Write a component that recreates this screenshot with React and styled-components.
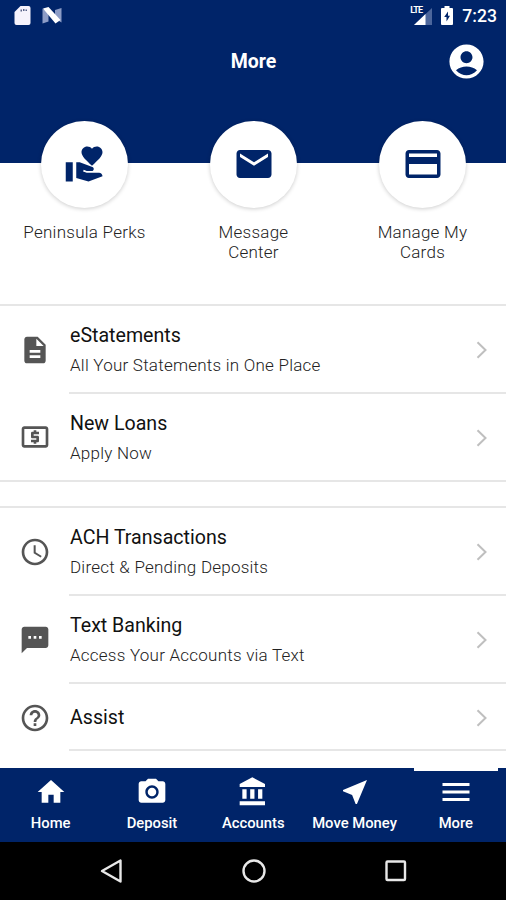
import React from "react";
import styled, { createGlobalStyle } from "styled-components";
import {
  MdAccessTime,
  MdAccountCircle,
  MdCameraAlt,
  MdCreditCard,
  MdDescription,
  MdEmail,
  MdHelpOutline,
  MdHome,
  MdLocalAtm,
  MdMenu,
  MdNearMe,
  MdSms,
  MdVolunteerActivism,
} from "react-icons/md";

const NAVY = "#002469";

const BankIcon = ({ size }) => (
  <svg width={size} height={size} viewBox="0 0 24 24" fill="currentColor">
    <path d="M4 10v7h3.200v-7H4zm5.900 0v7h3.200v-7H9.900zM2 22h19v-3H2v3zm13.800-12v7H19v-7h-3.200zm-4.300-9L2 6v2.300h19V6l-9.500-5z" />
  </svg>
);

const shortcuts = [
  { label: "Peninsula Perks", icon: MdVolunteerActivism },
  { label: "Message Center", icon: MdEmail },
  { label: "Manage My Cards", icon: MdCreditCard },
];

const statements = [
  {
    title: "eStatements",
    text: "All Your Statements in One Place",
    icon: MdDescription,
  },
  { title: "New Loans", text: "Apply Now", icon: MdLocalAtm },
];

const services = [
  {
    title: "ACH Transactions",
    text: "Direct & Pending Deposits",
    icon: MdAccessTime,
  },
  {
    title: "Text Banking",
    text: "Access Your Accounts via Text",
    icon: MdSms,
  },
  { title: "Assist", icon: MdHelpOutline },
];

const tabs = [
  { label: "Home", icon: MdHome, size: 32 },
  { label: "Deposit", icon: MdCameraAlt, size: 32 },
  { label: "Accounts", icon: BankIcon, size: 32 },
  { label: "Move Money", icon: MdNearMe, size: 32 },
  { label: "More", icon: MdMenu, size: 36, active: true },
];

const StatusIcons = () => (
  <StatusBar>
    <StatusGroup>
      <svg width="17" height="19" viewBox="0 0 17 19">
        <path
          d="M6.500 0h8a2 2 0 0 1 2 2v15a2 2 0 0 1-2 2H2.500a2 2 0 0 1-2-2V6z"
          fill="#f6f3fc"
        />
        <path d="M6.500 3.500H8v2H6.500zM9 3h1.500v2H9zM11.500 3.500H13v1.500h-1.500z" fill="#5a6489" />
      </svg>
      <svg width="20" height="17" viewBox="0 0 20 17">
        <path d="M.5 1.500v15l6-2V5zM19.500 1v14.500l-6.500-4V3z" fill="#8c9cc6" />
        <path d="M1 1.500 6.500 0l12 13-5 3.500z" fill="#fff" />
      </svg>
    </StatusGroup>
    <StatusGroup $right>
      <Signal>
        <Lte>LTE</Lte>
        <svg width="18" height="17" viewBox="0 0 18 17">
          <path d="M18 0v17H0z" fill="#4c669c" />
          <path d="M11.500 6v11H0z" fill="#fff" />
        </svg>
      </Signal>
      <svg width="12" height="19" viewBox="0 0 12 19">
        <path
          d="M3.500 0h5v2H11a1 1 0 0 1 1 1v15a1 1 0 0 1-1 1H1a1 1 0 0 1-1-1V3a1 1 0 0 1 1-1h2.500z"
          fill="#fff"
        />
        <path d="M7 5.500 3.200 11H5.500v4.500L9 9.800H7z" fill={NAVY} />
      </svg>
      <Clock>7:23</Clock>
    </StatusGroup>
  </StatusBar>
);

const MenuRow = ({ item, last }) => {
  const Icon = item.icon;
  return (
    <Row>
      <RowIcon>
        <Icon size={32} />
      </RowIcon>
      <RowBody $short={!item.text} $last={last}>
        <div>
          <RowTitle>{item.title}</RowTitle>
          {item.text && <RowText>{item.text}</RowText>}
        </div>
        <svg width="12" height="18" viewBox="0 0 12 18" fill="none">
          <path d="M1.500 1.200 9.500 9l-8 7.800" stroke="#bfbfbf" strokeWidth="2" />
        </svg>
      </RowBody>
    </Row>
  );
};

const App = () => {
  return (
    <React.Fragment>
      <GlobalStyle />
      <Screen>
        <Header>
          <StatusIcons />
          <TitleBar>
            <span />
            <PageTitle>More</PageTitle>
            <Profile>
              <MdAccountCircle size={41} />
            </Profile>
          </TitleBar>
        </Header>

        <Shortcuts>
          {shortcuts.map(({ label, icon: Icon }) => (
            <Shortcut key={label}>
              <Circle>
                <Icon size={42} />
              </Circle>
              <ShortcutLabel>{label}</ShortcutLabel>
            </Shortcut>
          ))}
        </Shortcuts>

        <Section>
          {statements.map((s, idx) => (
            <MenuRow key={s.title} item={s} last={idx === 1} />
          ))}
        </Section>
        <Gap />
        <Section $open>
          {services.map((s) => (
            <MenuRow key={s.title} item={s} />
          ))}
        </Section>

        <TabBar>
          {tabs.map(({ label, icon: Icon, size, active }) => (
            <Tab key={label}>
              <Indicator $active={active} />
              <TabIcon>
                <Icon size={size} />
              </TabIcon>
              <TabLabel>{label}</TabLabel>
            </Tab>
          ))}
        </TabBar>

        <SystemBar>
          <svg width="24" height="26" viewBox="0 0 24 26">
            <path d="M20.500 2.500v21L2 13z" />
          </svg>
          <svg width="26" height="26" viewBox="0 0 26 26">
            <circle cx="13" cy="13" r="10.500" />
          </svg>
          <svg width="24" height="26" viewBox="0 0 24 26">
            <rect x="2.500" y="3.500" width="18.500" height="18.500" rx="1" />
          </svg>
        </SystemBar>
      </Screen>
    </React.Fragment>
  );
};

const GlobalStyle = createGlobalStyle`
  * {
    box-sizing: border-box;
  }
  body {
    margin: 0;
    background: #fff;
    font-family: Roboto, "Liberation Sans", sans-serif;
  }
  svg {
    display: block;
    flex-shrink: 0;
  }
`;

const Screen = styled.div`
  width: 506px;
  height: 900px;
  display: flex;
  flex-direction: column;
  overflow: hidden;
  background: #fff;
`;

const Header = styled.header`
  height: 163px;
  flex-shrink: 0;
  background: ${NAVY};
  color: #fff;
`;

const StatusBar = styled.div`
  height: 31px;
  padding: 0 9px 0 14px;
  display: flex;
  justify-content: space-between;
  align-items: center;
`;

const StatusGroup = styled.div`
  display: flex;
  align-items: center;
  gap: ${(props) => (props.$right ? "9px" : "11px")};
`;

const Signal = styled.div`
  width: 22px;
  height: 19px;
  display: flex;
  align-items: flex-end;
  justify-content: flex-end;
  position: relative;
`;

const Lte = styled.span`
  position: absolute;
  left: 0;
  top: 0;
  font-size: 9px;
  line-height: 9px;
  font-weight: 700;
  letter-spacing: -0.9px;
`;

const Clock = styled.span`
  font-size: 17.6px;
  font-weight: 500;
`;

const TitleBar = styled.div`
  height: 61px;
  padding: 0 19px 0 20px;
  display: grid;
  grid-template-columns: 1fr auto 1fr;
  align-items: center;
`;

const PageTitle = styled.h1`
  margin: 0;
  font-size: 19.5px;
  font-weight: 700;
`;

const Profile = styled.div`
  display: flex;
  justify-content: flex-end;
`;

const Shortcuts = styled.div`
  height: 141px;
  flex-shrink: 0;
  display: grid;
  grid-template-columns: repeat(3, 169px);
`;

const Shortcut = styled.div`
  display: flex;
  flex-direction: column;
  align-items: center;
  margin-top: -42px;
`;

const Circle = styled.div`
  width: 87px;
  height: 87px;
  padding-bottom: 2px;
  border-radius: 50%;
  display: flex;
  align-items: center;
  justify-content: center;
  flex-shrink: 0;
  background: #fff;
  color: ${NAVY};
  box-shadow: 0 1px 4px rgba(0, 0, 0, 0.2);
`;

const ShortcutLabel = styled.span`
  width: 123px;
  margin-top: 14px;
  text-align: center;
  font-size: 17px;
  line-height: 20px;
  font-weight: 300;
  letter-spacing: 0.25px;
  color: #222;
`;

const Section = styled.section`
  border-top: 2px solid #e6e6e6;
  border-bottom: ${(props) => (props.$open ? "none" : "2px solid #e6e6e6")};
  flex-shrink: 0;
`;

const Gap = styled.div`
  height: 24px;
  flex-shrink: 0;
`;

const Row = styled.div`
  display: flex;
`;

const RowIcon = styled.div`
  width: 69px;
  padding-left: 19px;
  display: flex;
  align-items: center;
  color: #555;
`;

const RowBody = styled.div`
  flex: 1;
  height: ${(props) => (props.$short ? "67px" : props.$last ? "86px" : "88px")};
  padding: 2px 18px 0 1px;
  display: flex;
  align-items: center;
  justify-content: space-between;
  border-bottom: ${(props) => (props.$last ? "none" : "2px solid #e6e6e6")};
`;

const RowTitle = styled.div`
  font-size: 19.6px;
  line-height: 24px;
  color: #111;
`;

const RowText = styled.div`
  margin: 7px 0 2px;
  font-size: 17px;
  line-height: 20px;
  font-weight: 300;
  letter-spacing: 0.23px;
  color: #222;
`;

const TabBar = styled.nav`
  height: 74px;
  margin-top: auto;
  flex-shrink: 0;
  display: grid;
  grid-template-columns: repeat(5, 101.3px);
  background: ${NAVY};
  color: #fff;
`;

const Tab = styled.div`
  display: flex;
  flex-direction: column;
  align-items: center;
`;

const Indicator = styled.div`
  width: 84px;
  height: 3px;
  background: ${(props) => (props.$active ? "#fff" : "transparent")};
`;

const TabIcon = styled.div`
  height: 42px;
  display: flex;
  align-items: center;
`;

const TabLabel = styled.span`
  margin-top: 1px;
  font-size: 14.8px;
  line-height: 18px;
  font-weight: 500;
  white-space: nowrap;
`;

const SystemBar = styled.div`
  height: 58px;
  padding: 0 98px 0 100px;
  flex-shrink: 0;
  display: flex;
  justify-content: space-between;
  align-items: center;
  background: #000;

  & svg {
    fill: none;
    stroke: #e8e8e8;
    stroke-width: 2.4;
    stroke-linejoin: round;
  }
`;

export default App;
